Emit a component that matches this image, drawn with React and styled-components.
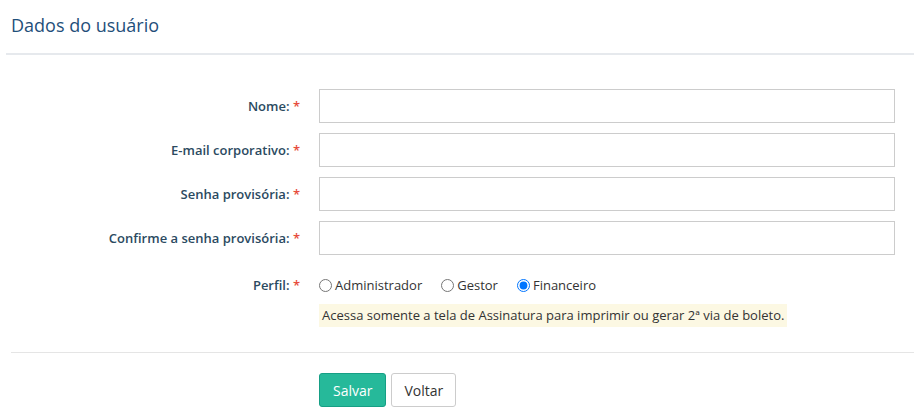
import React from 'react'
import styled, { createGlobalStyle } from 'styled-components'

const GlobalStyle = createGlobalStyle`
    body {
        margin: 0;
        background: #fff;
        font-family: "Open Sans", "DejaVu Sans", sans-serif;
        color: #333;
    }
`

const Page = styled.div`
    width: 914px;
`

const Header = styled.div`
    margin-left: 6px;
    padding: 12px 5px 15px;
    border-bottom: 2px solid #e6e9ed;
`

const Title = styled.h2`
    margin: 0;
    font-size: 18px;
    line-height: 26px;
    font-weight: 400;
    color: #1f4f7a;
`

const Form = styled.form`
    margin-top: 34px;
    display: grid;
    grid-template-columns: 300px 576px;
    column-gap: 19px;
    row-gap: 10px;
    align-items: center;
`

const Label = styled.label`
    text-align: right;
    font-size: 13px;
    font-weight: 600;
    color: #2b4a61;
    align-self: ${p => (p.top ? 'start' : 'center')};
    margin-top: ${p => (p.top ? '11px' : '0')};
`

const Required = styled.span`
    color: #e74c3c;
`

const Input = styled.input`
    box-sizing: border-box;
    height: 34px;
    width: 100%;
    border: 1px solid #ccc;
    padding: 6px 12px;
    font-size: 14px;
    outline: none;
`

const Field = styled.div`
    margin-top: ${p => p.spaced || 0};
`

const RadioGroup = styled.div`
    display: flex;
    align-items: center;
    gap: 19px;
    height: 20px;
`

const RadioOption = styled.label`
    display: flex;
    align-items: center;
    font-size: 13px;
    color: #333;
    gap: 3px;

    input {
        margin: 0;
        width: 13px;
        height: 13px;
    }
`

const Help = styled.div`
    display: inline-block;
    margin-top: 9px;
    background: #fcf8e3;
    padding: 3px 3px;
    font-size: 13px;
    line-height: 17px;
    color: #333;
`

const Footer = styled.div`
    margin: 25px 0 0 11px;
    padding: 20px 0 0 308px;
    border-top: 1px solid #e5e5e5;
    display: flex;
    gap: 5px;
`

const Button = styled.button`
    height: 34px;
    padding: 0 ${p => (p.primary ? '13px' : '12px')};
    font-family: inherit;
    font-size: 14px;
    border-radius: 3px;
    border: 1px solid ${p => (p.primary ? '#169f85' : '#ccc')};
    background: ${p => (p.primary ? '#26b99a' : '#fff')};
    color: ${p => (p.primary ? '#fff' : '#333')};
`

const fields = [
    'Nome:',
    'E-mail corporativo:',
    'Senha provisória:',
    'Confirme a senha provisória:',
]

const App = () => {
    return (
        <Page>
            <GlobalStyle />
            <Header>
                <Title>Dados do usuário</Title>
            </Header>
            <Form onSubmit={e => e.preventDefault()}>
                {fields.map(f => (
                    <React.Fragment key={f}>
                        <Label>{f} <Required>*</Required></Label>
                        <Input type="text" />
                    </React.Fragment>
                ))}
                <Label top>Perfil: <Required>*</Required></Label>
                <Field spaced="10px">
                    <RadioGroup>
                        <RadioOption><input type="radio" name="perfil" />Administrador</RadioOption>
                        <RadioOption><input type="radio" name="perfil" />Gestor</RadioOption>
                        <RadioOption><input type="radio" name="perfil" defaultChecked />Financeiro</RadioOption>
                    </RadioGroup>
                    <Help>Acessa somente a tela de Assinatura para imprimir ou gerar 2ª via de boleto.</Help>
                </Field>
            </Form>
            <Footer>
                <Button primary>Salvar</Button>
                <Button>Voltar</Button>
            </Footer>
        </Page>
    )
}

export default App
